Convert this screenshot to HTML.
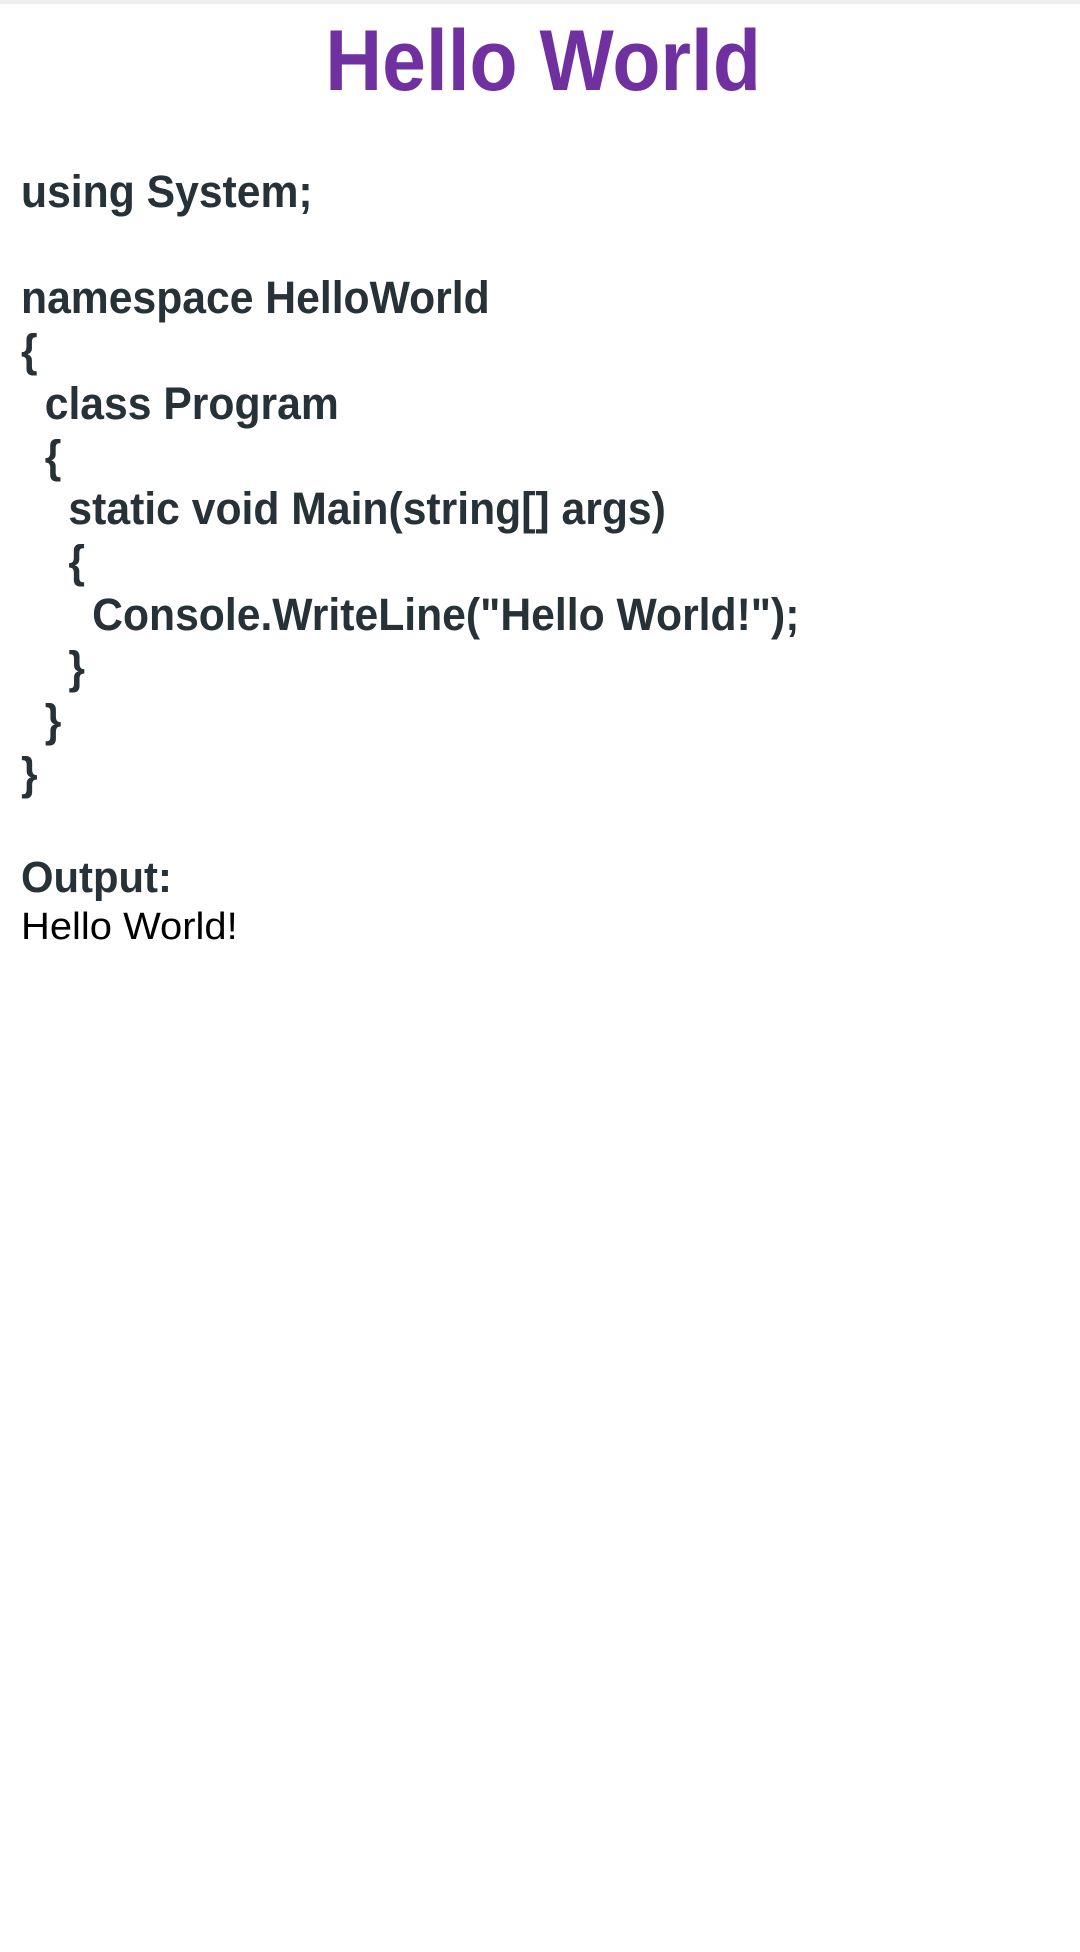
<!DOCTYPE html>
<html><head><meta charset="utf-8"><style>
html,body{margin:0;padding:0;background:#fff;width:1080px;height:1952px;overflow:hidden;position:relative;font-family:"Liberation Sans",sans-serif}
.top{position:absolute;left:0;top:0;width:1080px;height:4px;background:#eeeeee}
.t{position:absolute;left:0;width:1086px;top:11px;text-align:center;font-size:86px;line-height:100px;font-weight:bold;color:#7030a0}
.t span{display:inline-block;transform:scaleX(0.915);transform-origin:center}
pre{position:absolute;left:21px;top:166px;margin:0;font-family:"Liberation Sans",sans-serif;font-weight:bold;font-size:45.4px;line-height:52.9px;color:#263238;transform:scaleX(0.94);transform-origin:left top}
.o{position:absolute;left:21px;top:852px;font-weight:bold;font-size:44px;line-height:52.9px;color:#263238;transform:scaleX(0.95);transform-origin:left top;white-space:nowrap}
.h{position:absolute;left:21px;top:904px;font-size:38.4px;line-height:45px;color:#000;transform:scaleX(1.04);transform-origin:left top;white-space:nowrap}
</style></head><body>
<div class="top"></div>
<div class="t"><span>Hello World</span></div>
<pre>using System;

namespace HelloWorld
{
  class Program
  {
    static void Main(string[] args)
    {
      Console.WriteLine("Hello World!");
    }
  }
}</pre>
<div class="o">Output:</div>
<div class="h">Hello World!</div>
</body></html>
